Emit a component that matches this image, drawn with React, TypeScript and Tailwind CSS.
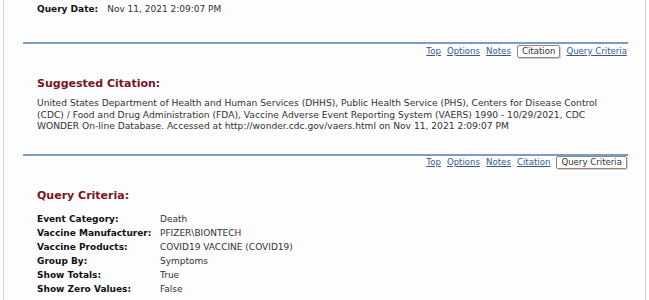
import React from "react";

const links = ["Top", "Options", "Notes", "Citation", "Query Criteria"];

function NavRow({ active }: { active: string }) {
  return (
    <div className="flex justify-end items-center gap-[6px] pr-[1px] h-[13px] text-[8.6px] leading-[11px]">
      {links.map((l) =>
        l === active ? (
          <span
            key={l}
            className="border border-[#9a8378] rounded-[2px] px-[4px] h-[13px] leading-[11px] text-[#333] bg-white shadow-[1px_1px_0_#d8d0cc]"
          >
            {l}
          </span>
        ) : (
          <a key={l} className="text-[#3b5a8c] underline underline-offset-[1px]">
            {l}
          </a>
        )
      )}
    </div>
  );
}

const criteria: [string, string][] = [
  ["Event Category:", "Death"],
  ["Vaccine Manufacturer:", "PFIZER\\BIONTECH"],
  ["Vaccine Products:", "COVID19 VACCINE (COVID19)"],
  ["Group By:", "Symptoms"],
  ["Show Totals:", "True"],
  ["Show Zero Values:", "False"],
];

export default function App() {
  return (
    <div
      className="w-[649px] h-[300px] overflow-hidden bg-white text-[#333]"
      style={{ fontFamily: '"DejaVu Sans", Verdana, sans-serif' }}
    >
      <div className="ml-[3px] w-[643px] h-[300px] border-l border-[#d6d6d6] border-r border-r-[#c5d3e3] bg-[#fdfdfe]">
        {/* query date */}
        <div className="pt-[4px] pl-[33px] flex gap-[9px] text-[9px] leading-[11px]">
          <span className="font-bold text-[#111]">Query Date:</span>
          <span>Nov 11, 2021 2:09:07 PM</span>
        </div>

        {/* citation section */}
        <div className="mt-[27px] ml-[19px] w-[605px] border-t-2 border-[#7a9cc6]">
          <div className="pt-[1px]">
            <NavRow active="Citation" />
          </div>
          <h2 className="mt-[19px] ml-[14px] text-[11px] leading-[13px] font-bold text-[#7a1426]">
            Suggested Citation:
          </h2>
          <p className="mt-[8px] ml-[14px] w-[580px] text-[9.15px] leading-[11.5px]">
            United States Department of Health and Human Services (DHHS), Public Health Service (PHS), Centers for
            Disease Control (CDC) / Food and Drug Administration (FDA), Vaccine Adverse Event Reporting System (VAERS)
            1990 - 10/29/2021, CDC WONDER On-line Database. Accessed at http://wonder.cdc.gov/vaers.html on Nov 11, 2021
            2:09:07 PM
          </p>
        </div>

        {/* query criteria section */}
        <div className="mt-[21px] ml-[19px] w-[605px] border-t-2 border-[#7a9cc6]">
          <NavRow active="Query Criteria" />
          <h2 className="mt-[20px] ml-[14px] text-[11px] leading-[13px] font-bold text-[#7a1426]">
            Query Criteria:
          </h2>
          <div className="mt-[10px] ml-[14px] grid grid-cols-[123px_1fr] text-[9px] leading-[14px]">
            {criteria.map(([k, v]) => (
              <React.Fragment key={k}>
                <span className="font-bold text-[#111]">{k}</span>
                <span>{v}</span>
              </React.Fragment>
            ))}
          </div>
        </div>
      </div>
    </div>
  );
}
